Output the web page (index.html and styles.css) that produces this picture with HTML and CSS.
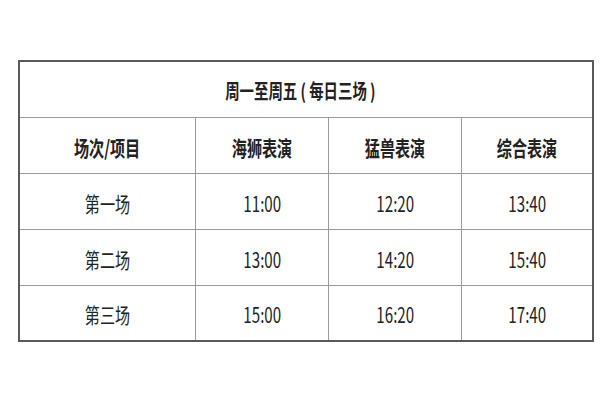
FILE: index.html
```html
<!DOCTYPE html>
<html lang="zh-CN">
<head>
<meta charset="utf-8">
<title>表演时间</title>
<link rel="stylesheet" href="styles.css">
</head>
<body>
<div class="schedule">
  <div class="cell title"><span class="txt">周一至周五 ( 每日三场 )</span></div>
  <div class="cell head"><span class="txt">场次/项目</span></div>
  <div class="cell head"><span class="txt">海狮表演</span></div>
  <div class="cell head"><span class="txt">猛兽表演</span></div>
  <div class="cell head last"><span class="txt">综合表演</span></div>

  <div class="cell"><span class="txt">第一场</span></div>
  <div class="cell"><span class="txt">11:00</span></div>
  <div class="cell"><span class="txt">12:20</span></div>
  <div class="cell last"><span class="txt">13:40</span></div>

  <div class="cell"><span class="txt">第二场</span></div>
  <div class="cell"><span class="txt">13:00</span></div>
  <div class="cell"><span class="txt">14:20</span></div>
  <div class="cell last"><span class="txt">15:40</span></div>

  <div class="cell bottom"><span class="txt">第三场</span></div>
  <div class="cell bottom"><span class="txt">15:00</span></div>
  <div class="cell bottom"><span class="txt">16:20</span></div>
  <div class="cell bottom last"><span class="txt">17:40</span></div>
</div>
</body>
</html>
```

FILE: styles.css
```css
html, body {
  margin: 0;
  padding: 0;
  background: #ffffff;
}

body {
  font-family: "Noto Sans CJK SC", "Noto Sans", sans-serif;
  color: #222222;
}

.schedule {
  margin: 60px 0 0 18px;
  width: 572px;
  border: 2px solid #5a5a5a;
  display: grid;
  grid-template-columns: 176px 133px 133px 130px;
  grid-template-rows: 56px 56px 56px 56px 54px;
}

.cell {
  display: flex;
  align-items: center;
  justify-content: center;
  border-right: 1px solid #9a9a9a;
  border-bottom: 1px solid #9a9a9a;
  padding-top: 3px;
  box-sizing: border-box;
  font-size: 21px;
  line-height: 1;
}

.cell.last {
  border-right: none;
}

.cell.bottom {
  border-bottom: none;
}

.title {
  grid-column: 1 / 5;
  border-right: none;
  font-size: 20px;
  font-weight: 700;
  padding-right: 12px;
}

.head {
  font-weight: 700;
}

.txt {
  display: inline-block;
  transform: scaleX(0.72);
  white-space: pre;
}
```
